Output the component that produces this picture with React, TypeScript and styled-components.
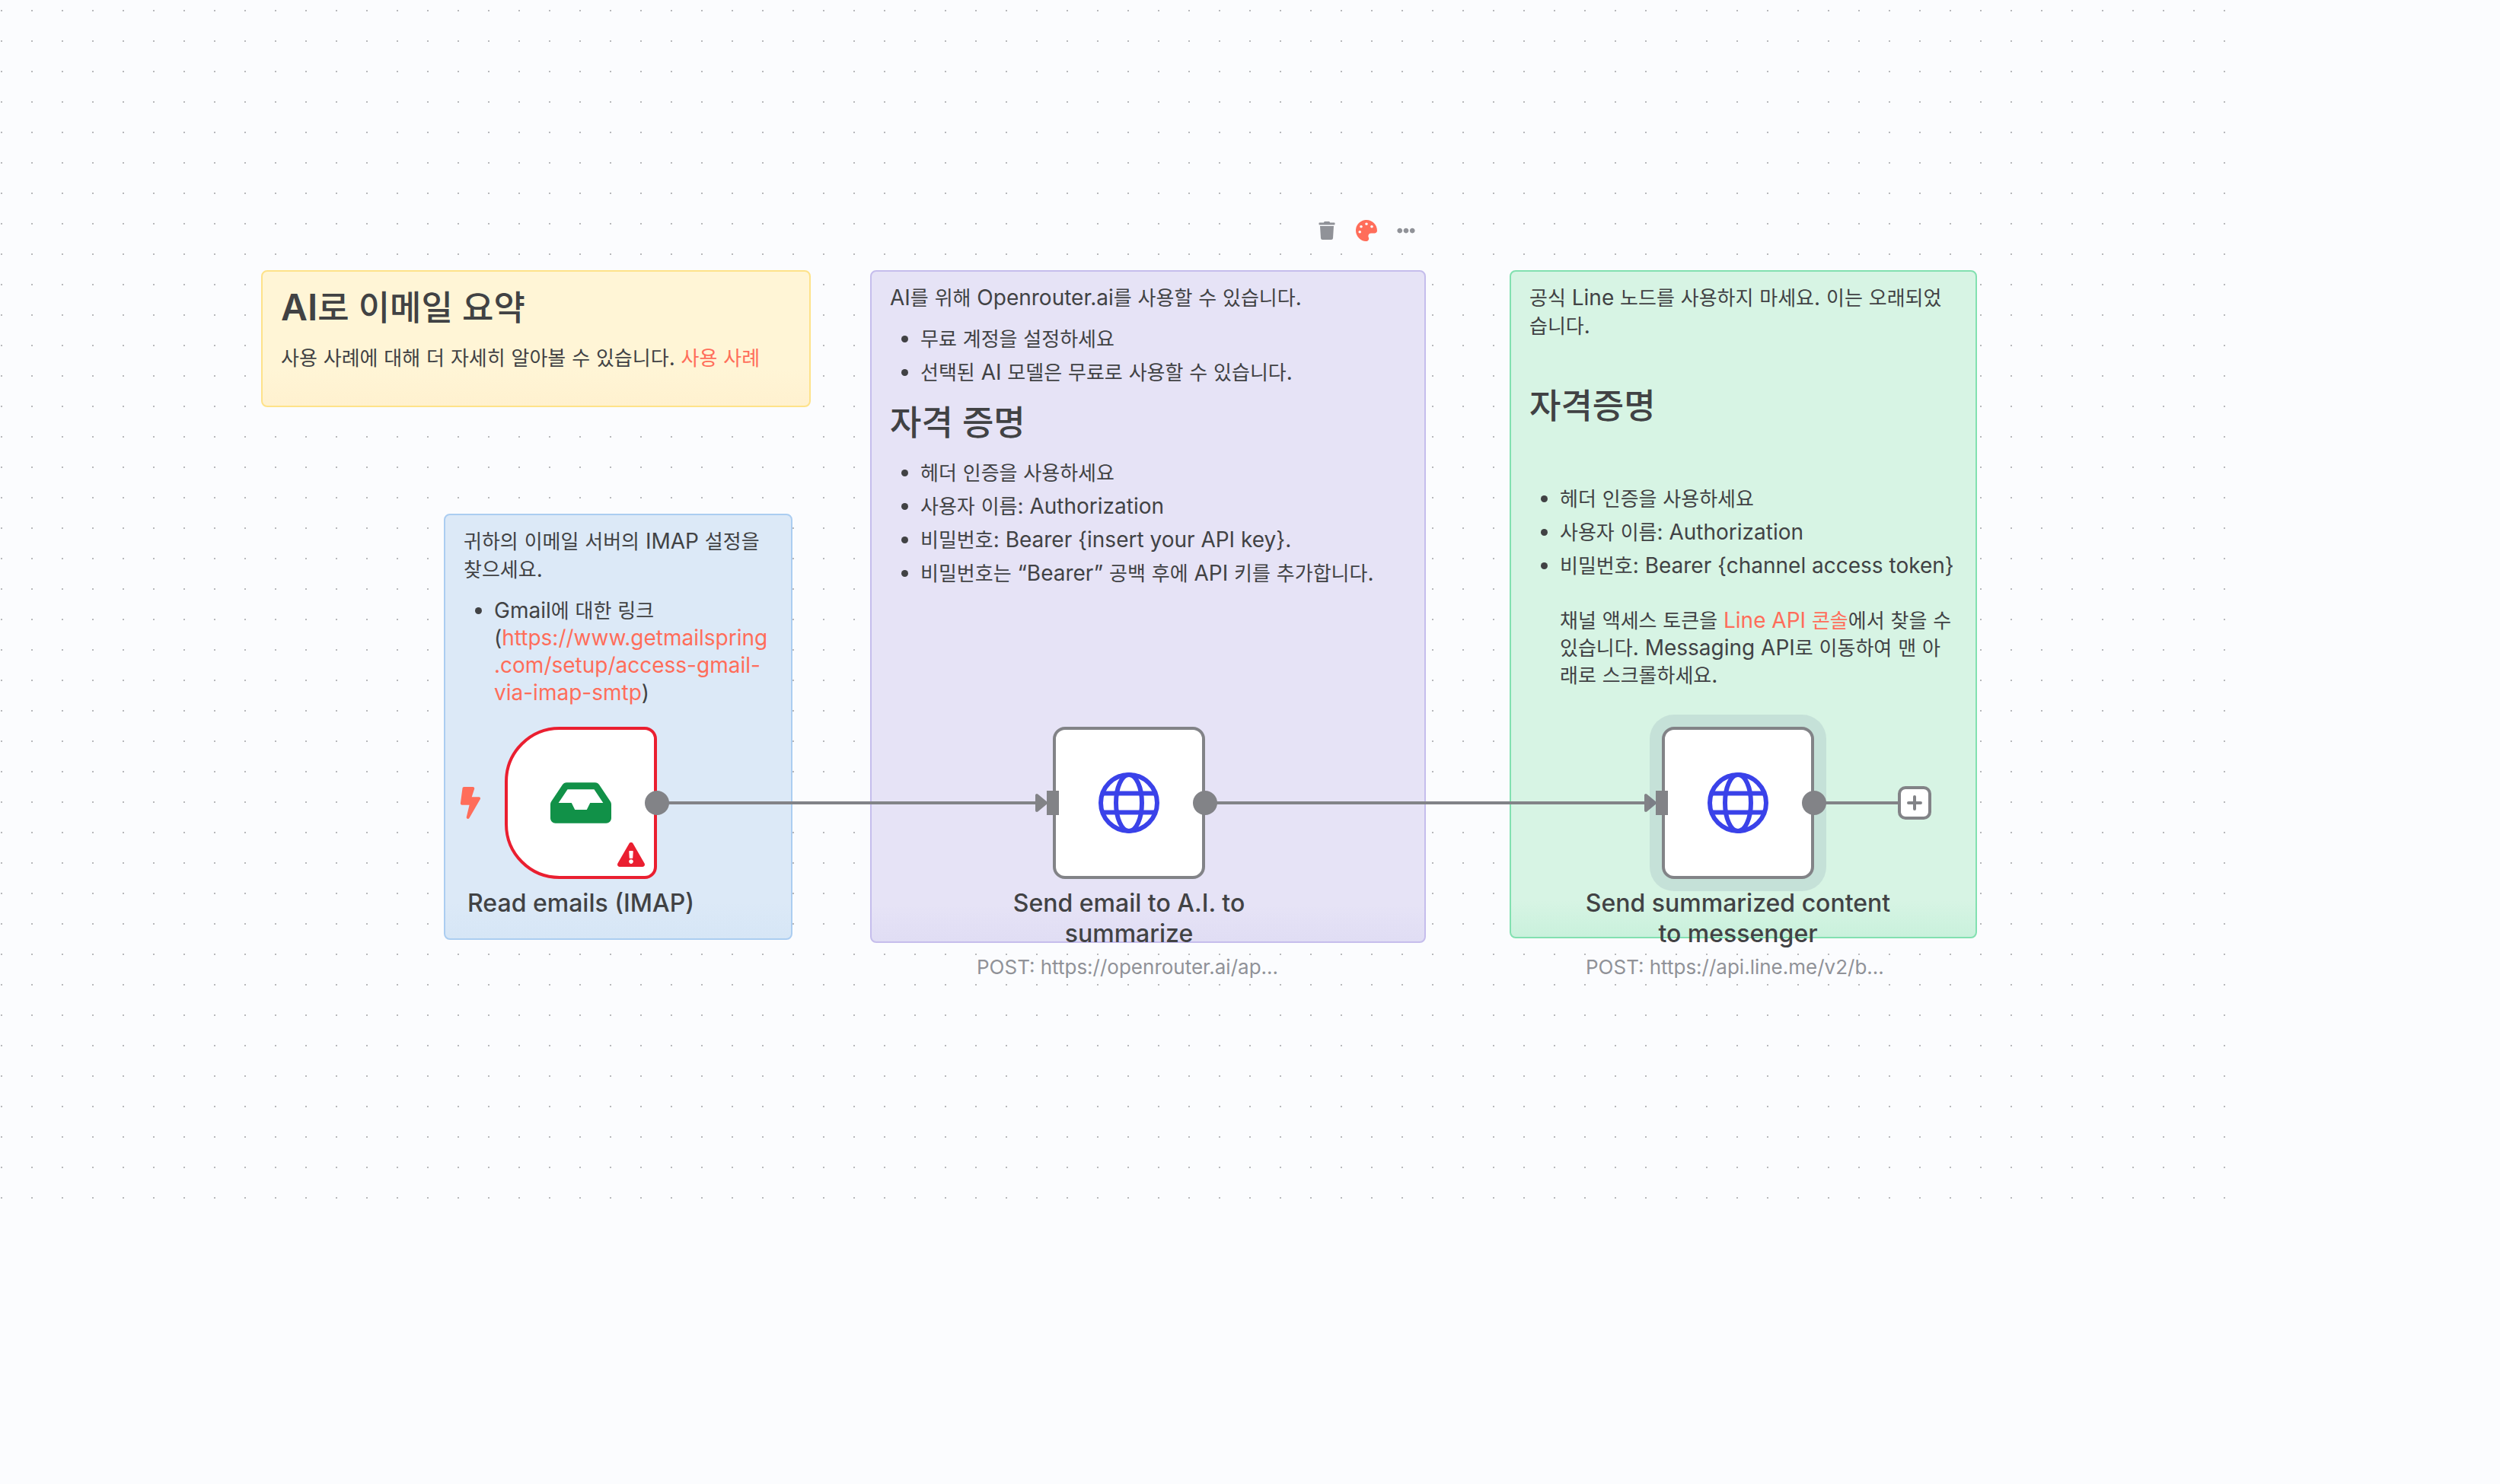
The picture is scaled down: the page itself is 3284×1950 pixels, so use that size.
import React from 'react';
import styled, { createGlobalStyle, css } from 'styled-components';
import { FaBolt, FaEllipsisH, FaExclamationTriangle, FaInbox, FaPalette, FaTrash } from 'react-icons/fa';

const color = {
  canvas: '#fbfcfe',
  dot: '#b7b8bb',
  text: '#414244',
  muted: '#909298',
  link: '#ff6d5a',
  line: '#828387',
  danger: '#ea1f30',
  globe: '#3a42e9',
  inbox: '#119148',
};

const tones = {
  yellow: { fill: '#fff5d6', foot: '#fff1cf', border: '#fee289' },
  blue: { fill: '#dce9f7', foot: '#d6e6f6', border: '#abcdf1' },
  purple: { fill: '#e6e3f6', foot: '#e0ddf4', border: '#c5bdec' },
  green: { fill: '#d7f4e4', foot: '#c9f1dc', border: '#82e0b0' },
};

type Tone = keyof typeof tones;

const GlobalStyle = createGlobalStyle`
  *, *::before, *::after { box-sizing: border-box; }
  body {
    margin: 0;
    background: ${color.canvas};
    color: ${color.text};
    font-family: Inter, 'Noto Sans CJK KR', sans-serif;
    font-size: 28px;
  }
`;

const Canvas = styled.main`
  position: relative;
  min-height: 100vh;
  overflow: hidden;
`;

const DotGrid = styled.div`
  position: absolute;
  top: 0;
  left: 0;
  width: 90%;
  height: 82%;
  background: conic-gradient(from 90deg at 38px 38px, ${color.dot} 90deg, transparent 0) -37px -25px / 40px 40px;
`;

const Note = styled.section<{ $tone: Tone; $x: number; $y: number; $w: number; $h: number }>`
  position: absolute;
  left: ${(p) => p.$x}px;
  top: ${(p) => p.$y}px;
  width: ${(p) => p.$w}px;
  height: ${(p) => p.$h}px;
  display: flex;
  flex-direction: column;
  gap: 17px;
  padding: 16px 24px 0;
  border: 2px solid ${(p) => tones[p.$tone].border};
  border-radius: 8px;
  background: linear-gradient(
    to top,
    ${(p) => tones[p.$tone].foot},
    ${(p) => tones[p.$tone].fill} 48px
  );
`;

const Heading = styled.h1<{ $roomy?: boolean }>`
  margin: ${(p) => (p.$roomy ? '38px 0 56px' : '0')};
  font-size: 48px;
  line-height: 62px;
  font-weight: 600;
`;

const Paragraph = styled.p`
  margin: 0;
  line-height: 37px;
`;

const List = styled.ul`
  display: flex;
  flex-direction: column;
  gap: 8px;
  margin: 0;
  padding-left: 40px;
  line-height: 36px;
  overflow-wrap: break-word;
`;

const Link = styled.a`
  color: ${color.link};
  text-decoration: none;
`;

/* Hangul is set slightly smaller so that it balances with the Latin letters. */
const Hangul = styled.span`
  font-family: 'Noto Sans CJK KR', sans-serif;
  font-size: 26px;
  line-height: 1;

  ${Heading} & {
    font-size: 45px;
    font-weight: 500;
  }
`;

function Mixed({ children }: { children: string }) {
  return (
    <>
      {children.split(/([가-힣]+)/).map((run, i) => (i % 2 ? <Hangul key={i}>{run}</Hangul> : run))}
    </>
  );
}

const Toolbar = styled.div`
  position: absolute;
  right: -2px;
  bottom: calc(100% + 30px);
  display: flex;
  background: ${color.canvas};
`;

const ToolButton = styled.button<{ $active?: boolean }>`
  display: flex;
  align-items: center;
  justify-content: center;
  width: 52px;
  height: 48px;
  padding: 0;
  border: 0;
  background: none;
  color: ${(p) => (p.$active ? color.link : color.muted)};
  font-size: ${(p) => (p.$active ? '28px' : '24px')};
  cursor: pointer;
`;

const Wires = styled.svg`
  position: absolute;
  top: 0;
  left: 0;
  width: 100%;
  height: 100%;
  pointer-events: none;
`;

const Node = styled.article<{ $x: number; $y: number }>`
  position: absolute;
  left: ${(p) => p.$x}px;
  top: ${(p) => p.$y}px;
  width: 400px;
  display: flex;
  flex-direction: column;
  align-items: center;
`;

const NodeBox = styled.div<{ $trigger?: boolean; $selected?: boolean }>`
  position: relative;
  display: flex;
  align-items: center;
  justify-content: center;
  width: 200px;
  height: 200px;
  border: 4px solid ${color.line};
  border-radius: 16px;
  background: #fff;
  ${(p) =>
    p.$trigger &&
    css`
      border-color: ${color.danger};
      border-radius: 72px 16px 16px 72px;
    `}
  ${(p) =>
    p.$selected &&
    css`
      box-shadow: 0 0 0 16px rgba(70, 90, 130, 0.12);
    `}
`;

const OutputPort = styled.span`
  position: absolute;
  right: -20px;
  top: 80px;
  width: 32px;
  height: 32px;
  border-radius: 50%;
  background: ${color.line};
`;

const InputPort = styled.span`
  position: absolute;
  left: -12px;
  top: 80px;
  width: 16px;
  height: 32px;
  background: ${color.line};
`;

const TriggerMark = styled(FaBolt)`
  position: absolute;
  left: -70px;
  top: 75px;
  width: 42px;
  height: 42px;
  color: ${color.link};
`;

const IssueMark = styled(FaExclamationTriangle)`
  position: absolute;
  right: 12px;
  bottom: 10px;
  width: 36px;
  height: 36px;
  color: ${color.danger};
`;

const InboxIcon = styled(FaInbox)`
  width: 80px;
  height: 80px;
  color: ${color.inbox};
`;

const NodeName = styled.h2`
  margin: 12px -16px 0;
  font-size: 32px;
  line-height: 40px;
  font-weight: 500;
  text-align: center;
`;

const NodeDetail = styled.p`
  align-self: stretch;
  margin: 7px 0 0;
  color: ${color.muted};
  font-size: 26px;
  line-height: 34px;
  white-space: nowrap;
`;

const AddButton = styled.button`
  position: absolute;
  left: 2493px;
  top: 1033px;
  display: flex;
  align-items: center;
  justify-content: center;
  width: 44px;
  height: 44px;
  padding: 0;
  border: 4px solid ${color.line};
  border-radius: 10px;
  background: #fff;
  cursor: pointer;
`;

function Globe() {
  return (
    <svg width="80" height="80" viewBox="0 0 80 80" fill="none" stroke={color.globe} strokeWidth="6" aria-hidden="true">
      <circle cx="40" cy="40" r="37" />
      <ellipse cx="40" cy="40" rx="17" ry="37" />
      <path d="M5 27.5h70M5 52.5h70" />
    </svg>
  );
}

export default function App() {
  return (
    <>
      <GlobalStyle />
      <Canvas>
        <DotGrid />

        <Note $tone="yellow" $x={343} $y={355} $w={722} $h={180}>
          <Heading><Mixed>AI로 이메일 요약</Mixed></Heading>
          <Paragraph>
            <Mixed>사용 사례에 대해 더 자세히 알아볼 수 있습니다. </Mixed>
            <Link href="#use-case"><Mixed>사용 사례</Mixed></Link>
          </Paragraph>
        </Note>

        <Note $tone="blue" $x={583} $y={675} $w={458} $h={560}>
          <Paragraph><Mixed>귀하의 이메일 서버의 IMAP 설정을 찾으세요.</Mixed></Paragraph>
          <List>
            <li>
              <Mixed>Gmail에 대한 링크</Mixed>
              <br />(
              <Link href="https://www.getmailspring.com/setup/access-gmail-via-imap-smtp">
                https://www.getmailspring<br />.com/setup/access-gmail-<br />via-imap-smtp
              </Link>
              )
            </li>
          </List>
        </Note>

        <Note $tone="purple" $x={1143} $y={355} $w={730} $h={884}>
          <Toolbar>
            <ToolButton aria-label="Delete"><FaTrash /></ToolButton>
            <ToolButton aria-label="Change color" $active><FaPalette /></ToolButton>
            <ToolButton aria-label="More"><FaEllipsisH /></ToolButton>
          </Toolbar>
          <Paragraph><Mixed>AI를 위해 Openrouter.ai를 사용할 수 있습니다.</Mixed></Paragraph>
          <List>
            <li><Mixed>무료 계정을 설정하세요</Mixed></li>
            <li><Mixed>선택된 AI 모델은 무료로 사용할 수 있습니다.</Mixed></li>
          </List>
          <Heading><Mixed>자격 증명</Mixed></Heading>
          <List>
            <li><Mixed>헤더 인증을 사용하세요</Mixed></li>
            <li><Mixed>사용자 이름: Authorization</Mixed></li>
            <li><Mixed>{'비밀번호: Bearer {insert your API key}.'}</Mixed></li>
            <li><Mixed>비밀번호는 “Bearer” 공백 후에 API 키를 추가합니다.</Mixed></li>
          </List>
        </Note>

        <Note $tone="green" $x={1983} $y={355} $w={614} $h={878}>
          <Paragraph>
            <Mixed>공식 Line 노드를 사용하지 마세요. 이는 오래되었</Mixed>
            <wbr />
            <Mixed>습니다.</Mixed>
          </Paragraph>
          <Heading $roomy><Mixed>자격증명</Mixed></Heading>
          <List>
            <li><Mixed>헤더 인증을 사용하세요</Mixed></li>
            <li><Mixed>사용자 이름: Authorization</Mixed></li>
            <li>
              <Mixed>{'비밀번호: Bearer {channel access token}'}</Mixed>
              <br />
              <br />
              <Mixed>채널 액세스 토큰을 </Mixed>
              <Link href="https://developers.line.biz/console/"><Mixed>Line API 콘솔</Mixed></Link>
              <Mixed>에서 찾을 수 있습니다. Messaging API로 이동하여 맨 아</Mixed>
              <wbr />
              <Mixed>래로 스크롤하세요.</Mixed>
            </li>
          </List>
        </Note>

        <Wires aria-hidden="true" stroke={color.line} strokeWidth="4" fill="none">
          <path d="M863 1055H1364M1583 1055H2164M2383 1055H2493" />
          <path d="M1362 1045v20l12-10zM2162 1045v20l12-10z" fill={color.line} strokeLinejoin="round" />
        </Wires>

        <Node $x={563} $y={955}>
          <NodeBox $trigger>
            <TriggerMark />
            <InboxIcon />
            <IssueMark />
            <OutputPort />
          </NodeBox>
          <NodeName>Read emails (IMAP)</NodeName>
        </Node>

        <Node $x={1283} $y={955}>
          <NodeBox>
            <InputPort />
            <Globe />
            <OutputPort />
          </NodeBox>
          <NodeName>Send email to A.I. to summarize</NodeName>
          <NodeDetail>POST: https://openrouter.ai/ap...</NodeDetail>
        </Node>

        <Node $x={2083} $y={955}>
          <NodeBox $selected>
            <InputPort />
            <Globe />
            <OutputPort />
          </NodeBox>
          <NodeName>Send summarized content to messenger</NodeName>
          <NodeDetail>POST: https://api.line.me/v2/b...</NodeDetail>
        </Node>

        <AddButton aria-label="Add node">
          <svg width="20" height="20" viewBox="0 0 20 20" stroke={color.line} strokeWidth="4" strokeLinecap="round" aria-hidden="true">
            <path d="M10 2v16M2 10h16" />
          </svg>
        </AddButton>
      </Canvas>
    </>
  );
}
